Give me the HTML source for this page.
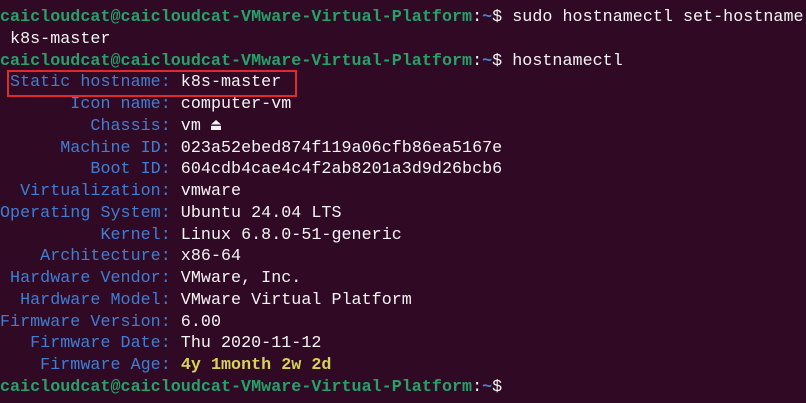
<!DOCTYPE html>
<html><head><meta charset="utf-8"><style>
html,body{margin:0;padding:0;}
body{width:806px;height:403px;background:#300a24;overflow:hidden;position:relative;}
pre{margin:0;position:absolute;left:0;top:7px;font-family:"Liberation Mono","DejaVu Sans Mono",monospace;font-size:16.7px;line-height:21.75px;color:#f4f4f4;letter-spacing:0.03px;}
.g{color:#26a269;font-weight:bold;}
.b{color:#3e7fd6;}
.p{color:#4a7fd0;font-weight:bold;}
.y{color:#d6d35a;font-weight:bold;}
.box{position:absolute;left:7px;top:70px;width:290px;height:27px;border:2px solid #e0282e;box-sizing:border-box;}
</style></head><body>
<pre><span class="g">caicloudcat@caicloudcat-VMware-Virtual-Platform</span>:<span class="p">~</span>$ sudo hostnamectl set-hostname
 k8s-master
<span class="g">caicloudcat@caicloudcat-VMware-Virtual-Platform</span>:<span class="p">~</span>$ hostnamectl
<span class="b"> Static hostname:</span> k8s-master
<span class="b">       Icon name:</span> computer-vm
<span class="b">         Chassis:</span> vm ⏏
<span class="b">      Machine ID:</span> 023a52ebed874f119a06cfb86ea5167e
<span class="b">         Boot ID:</span> 604cdb4cae4c4f2ab8201a3d9d26bcb6
<span class="b">  Virtualization:</span> vmware
<span class="b">Operating System:</span> Ubuntu 24.04 LTS
<span class="b">          Kernel:</span> Linux 6.8.0-51-generic
<span class="b">    Architecture:</span> x86-64
<span class="b"> Hardware Vendor:</span> VMware, Inc.
<span class="b">  Hardware Model:</span> VMware Virtual Platform
<span class="b">Firmware Version:</span> 6.00
<span class="b">   Firmware Date:</span> Thu 2020-11-12
<span class="b">    Firmware Age:</span> <span class="y">4y 1month 2w 2d</span>
<span class="g">caicloudcat@caicloudcat-VMware-Virtual-Platform</span>:<span class="p">~</span>$</pre>
<div class="box"></div>
</body></html>
